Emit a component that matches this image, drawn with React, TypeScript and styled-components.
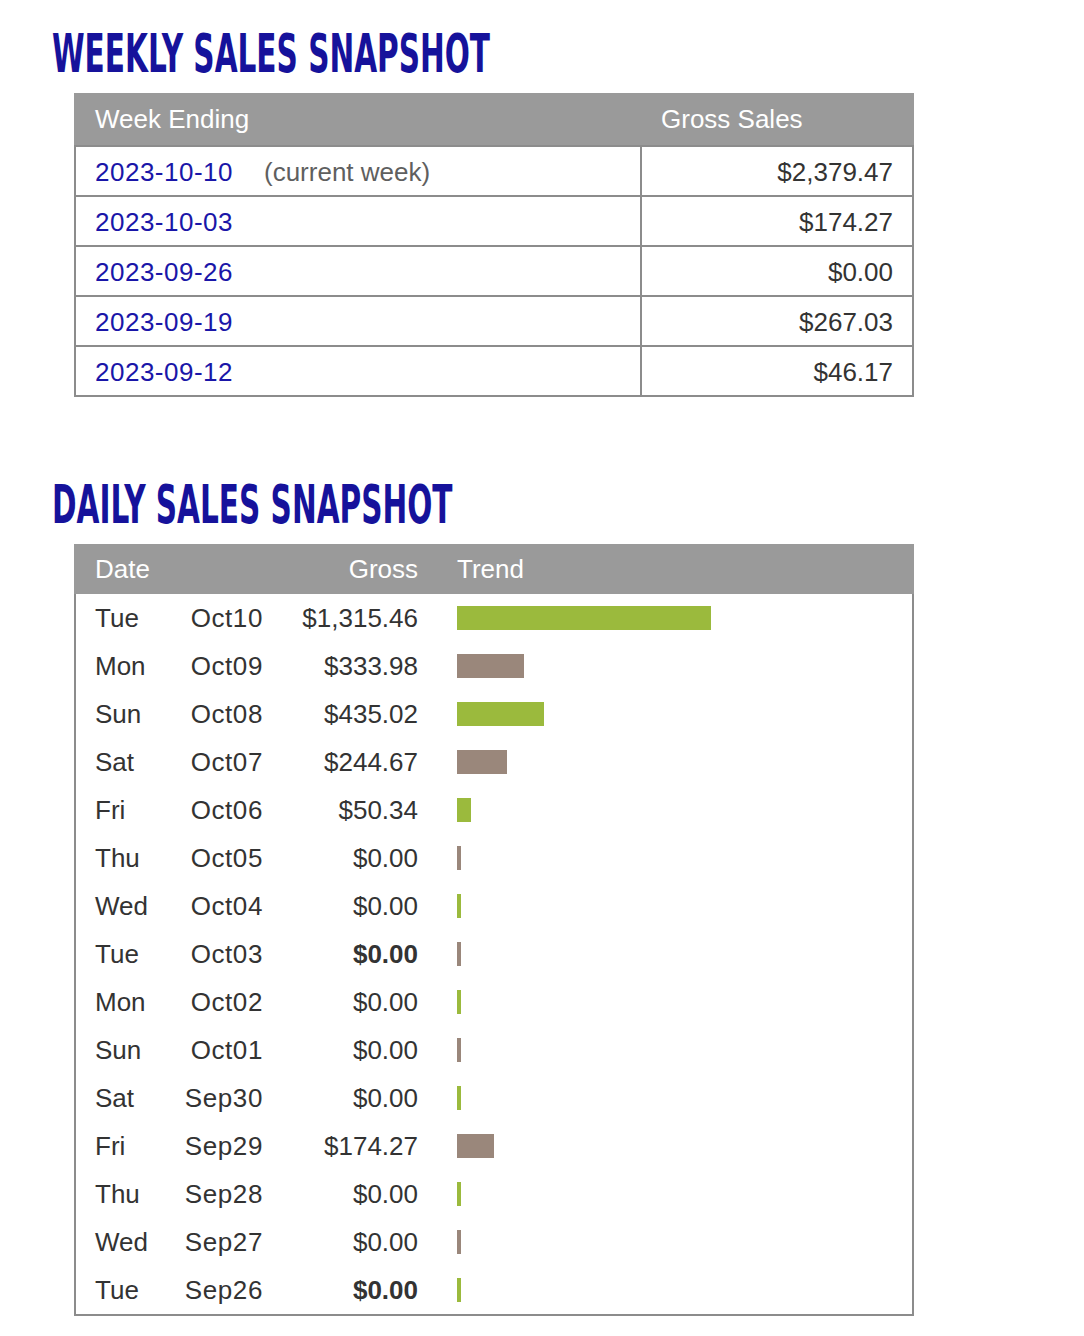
import styled, { createGlobalStyle } from "styled-components";

const GlobalStyle = createGlobalStyle`
  body {
    margin: 0;
    background: #ffffff;
    font-family: "Liberation Sans", Arial, sans-serif;
  }
`;

const Page = styled.div`
  display: flex;
  flex-direction: column;
  padding: 24px 0 0 52px;
  width: 862px;
`;

const Heading = styled.h1`
  margin: 0;
  font-family: "Liberation Sans Narrow", "DejaVu Sans Condensed", "Liberation Sans", sans-serif;
  font-weight: 700;
  font-size: 53px;
  line-height: 60px;
  color: #16129b;
  white-space: nowrap;
  transform-origin: left center;
  transform: scaleX(0.62);
`;

const Section = styled.section<{ $gap: number }>`
  display: flex;
  flex-direction: column;
  margin-top: ${(p) => p.$gap}px;
`;

const Table = styled.div`
  margin: 9px 0 0 22px;
  width: 840px;
  border: 2px solid #8c8c8c;
  border-top: none;
  box-sizing: border-box;
  color: #333333;
  font-size: 26px;
`;

const WeekHead = styled.div`
  display: grid;
  grid-template-columns: 566px 1fr;
  height: 52px;
  align-items: center;
  background: #9a9a9a;
  color: #ffffff;
  margin: 0 -2px;
  padding: 0 21px;
`;

const WeekRow = styled.div`
  display: grid;
  grid-template-columns: 564px 1fr;
  height: 48px;
  align-items: center;
  border-top: 2px solid #8c8c8c;
  &:first-of-type {
    border-top: none;
  }
`;

const WeekCell = styled.div<{ $right?: boolean }>`
  display: flex;
  align-items: center;
  height: 100%;
  padding: 2px 19px 0 19px;
  justify-content: ${(p) => (p.$right ? "flex-end" : "flex-start")};
  border-left: ${(p) => (p.$right ? "2px solid #8c8c8c" : "none")};
`;

const WeekLink = styled.a`
  color: #1a16a8;
  text-decoration: none;
  letter-spacing: 0.5px;
`;

const Note = styled.span`
  margin-left: 31px;
  color: #5f5f5f;
`;

const DayHead = styled.div`
  display: grid;
  grid-template-columns: 76px 92px 155px 1fr;
  height: 50px;
  align-items: center;
  background: #9a9a9a;
  color: #ffffff;
  margin: 0 -2px;
  padding: 0 0 0 21px;
`;

const DayRow = styled.div`
  display: grid;
  grid-template-columns: 76px 92px 155px 1fr;
  height: 48px;
  align-items: center;
  padding-left: 19px;
`;

const Cell = styled.div<{ $right?: boolean; $bold?: boolean }>`
  text-align: ${(p) => (p.$right ? "right" : "left")};
  font-weight: ${(p) => (p.$bold ? 700 : 400)};
  white-space: nowrap;
`;

const DateCell = styled(Cell)`
  letter-spacing: 0.6px;
`;

const TrendCell = styled.div`
  padding-left: 39px;
  display: flex;
  align-items: center;
`;

const Bar = styled.div<{ $green: boolean }>`
  height: 24px;
  background: ${(p) => (p.$green ? "#9bba3d" : "#9a877b")};
`;

const weeks = [
  { date: "2023-10-10", gross: "$2,379.47", current: true },
  { date: "2023-10-03", gross: "$174.27" },
  { date: "2023-09-26", gross: "$0.00" },
  { date: "2023-09-19", gross: "$267.03" },
  { date: "2023-09-12", gross: "$46.17" },
];

const days = [
  { day: "Tue", date: "Oct10", gross: 1315.46 },
  { day: "Mon", date: "Oct09", gross: 333.98 },
  { day: "Sun", date: "Oct08", gross: 435.02 },
  { day: "Sat", date: "Oct07", gross: 244.67 },
  { day: "Fri", date: "Oct06", gross: 50.34 },
  { day: "Thu", date: "Oct05", gross: 0 },
  { day: "Wed", date: "Oct04", gross: 0 },
  { day: "Tue", date: "Oct03", gross: 0, bold: true },
  { day: "Mon", date: "Oct02", gross: 0 },
  { day: "Sun", date: "Oct01", gross: 0 },
  { day: "Sat", date: "Sep30", gross: 0 },
  { day: "Fri", date: "Sep29", gross: 174.27 },
  { day: "Thu", date: "Sep28", gross: 0 },
  { day: "Wed", date: "Sep27", gross: 0 },
  { day: "Tue", date: "Sep26", gross: 0, bold: true },
];

const money = (n: number) =>
  "$" + n.toLocaleString("en-US", { minimumFractionDigits: 2, maximumFractionDigits: 2 });

export default function App() {
  const max = Math.max(...days.map((d) => d.gross));
  return (
    <>
      <GlobalStyle />
      <Page>
        <Section $gap={0}>
          <Heading>WEEKLY SALES SNAPSHOT</Heading>
          <Table>
            <WeekHead>
              <div>Week Ending</div>
              <div>Gross Sales</div>
            </WeekHead>
            {weeks.map((w) => (
              <WeekRow key={w.date}>
                <WeekCell>
                  <WeekLink href="#">{w.date}</WeekLink>
                  {w.current && <Note>(current week)</Note>}
                </WeekCell>
                <WeekCell $right>{w.gross}</WeekCell>
              </WeekRow>
            ))}
          </Table>
        </Section>
        <Section $gap={78}>
          <Heading>DAILY SALES SNAPSHOT</Heading>
          <Table>
            <DayHead>
              <div>Date</div>
              <div />
              <Cell $right>Gross</Cell>
              <TrendCell>Trend</TrendCell>
            </DayHead>
            {days.map((d, i) => (
              <DayRow key={d.date}>
                <Cell>{d.day}</Cell>
                <DateCell $right>{d.date}</DateCell>
                <Cell $right $bold={d.bold}>
                  {money(d.gross)}
                </Cell>
                <TrendCell>
                  <Bar $green={i % 2 === 0} style={{ width: (d.gross / max) * 250 + 4 }} />
                </TrendCell>
              </DayRow>
            ))}
          </Table>
        </Section>
      </Page>
    </>
  );
}
